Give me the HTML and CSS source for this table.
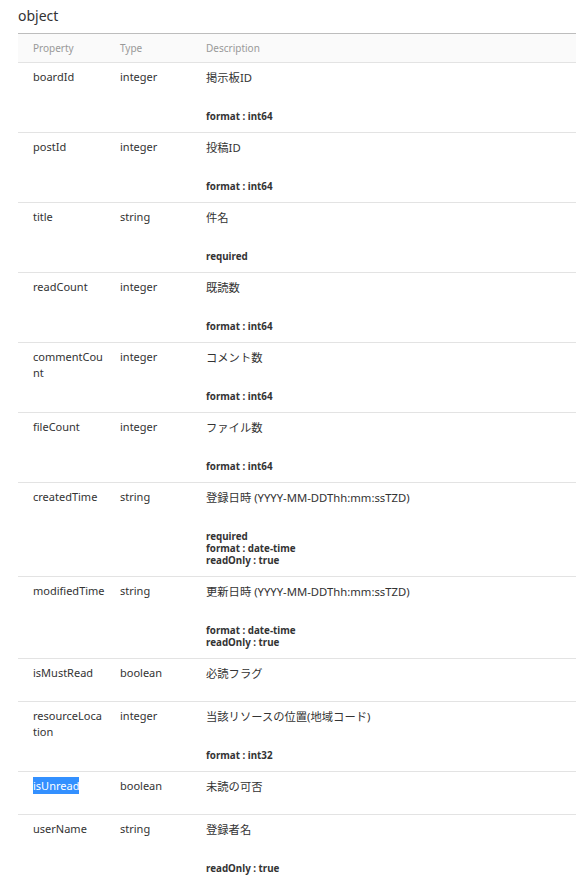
FILE: index.html
```html
<!DOCTYPE html>
<html lang="ja">
<head>
    <meta charset="UTF-8">
    <meta name="viewport" content="width=device-width, initial-scale=1.0">
    <title>object</title>
    <link rel="stylesheet" href="styles.css">
</head>
<body>
    <h3 class="model-title">object</h3>
    <table class="props">
        <thead>
            <tr>
                <th class="col-name">Property</th>
                <th class="col-type">Type</th>
                <th>Description</th>
            </tr>
        </thead>
        <tbody>
            <tr>
                <td>boardId</td>
                <td>integer</td>
                <td>
                    <p class="desc">掲示板ID</p>
                    <div class="attrs"><div>format : int64</div></div>
                </td>
            </tr>
            <tr>
                <td>postId</td>
                <td>integer</td>
                <td>
                    <p class="desc">投稿ID</p>
                    <div class="attrs"><div>format : int64</div></div>
                </td>
            </tr>
            <tr>
                <td>title</td>
                <td>string</td>
                <td>
                    <p class="desc">件名</p>
                    <div class="attrs"><div>required</div></div>
                </td>
            </tr>
            <tr>
                <td>readCount</td>
                <td>integer</td>
                <td>
                    <p class="desc">既読数</p>
                    <div class="attrs"><div>format : int64</div></div>
                </td>
            </tr>
            <tr>
                <td>commentCou<br>nt</td>
                <td>integer</td>
                <td>
                    <p class="desc">コメント数</p>
                    <div class="attrs"><div>format : int64</div></div>
                </td>
            </tr>
            <tr>
                <td>fileCount</td>
                <td>integer</td>
                <td>
                    <p class="desc">ファイル数</p>
                    <div class="attrs"><div>format : int64</div></div>
                </td>
            </tr>
            <tr>
                <td>createdTime</td>
                <td>string</td>
                <td>
                    <p class="desc">登録日時 (YYYY-MM-DDThh:mm:ssTZD)</p>
                    <div class="attrs">
                        <div>required</div>
                        <div>format : date-time</div>
                        <div>readOnly : true</div>
                    </div>
                </td>
            </tr>
            <tr>
                <td>modifiedTime</td>
                <td>string</td>
                <td>
                    <p class="desc">更新日時 (YYYY-MM-DDThh:mm:ssTZD)</p>
                    <div class="attrs">
                        <div>format : date-time</div>
                        <div>readOnly : true</div>
                    </div>
                </td>
            </tr>
            <tr>
                <td>isMustRead</td>
                <td>boolean</td>
                <td>
                    <p class="desc">必読フラグ</p>
                </td>
            </tr>
            <tr>
                <td>resourceLoca<br>tion</td>
                <td>integer</td>
                <td>
                    <p class="desc">当該リソースの位置(地域コード)</p>
                    <div class="attrs"><div>format : int32</div></div>
                </td>
            </tr>
            <tr>
                <td><span class="selected">isUnread</span></td>
                <td>boolean</td>
                <td>
                    <p class="desc">未読の可否</p>
                </td>
            </tr>
            <tr>
                <td>userName</td>
                <td>string</td>
                <td>
                    <p class="desc">登録者名</p>
                    <div class="attrs"><div>readOnly : true</div></div>
                </td>
            </tr>
        </tbody>
    </table>
</body>
</html>
```

FILE: styles.css
```css
body {
    margin: 0;
    font-family: "Noto Sans", "Noto Sans CJK JP", sans-serif;
    color: #333;
    background-color: #fff;
}
.model-title {
    margin: 0;
    padding: 6px 0 0 18px;
    height: 27px;
    font-size: 14px;
    font-weight: normal;
    line-height: 20px;
}
.props {
    margin-left: 18px;
    width: calc(100% - 18px);
    border-collapse: collapse;
    table-layout: fixed;
    font-size: 11px;
}
.props thead tr {
    background-color: #fafafa;
    border-top: 1px solid #bdbdbd;
    border-bottom: 1px solid #e3e3e3;
}
.props th {
    text-align: left;
    font-weight: normal;
    font-size: 10px;
    color: #999;
    height: 28px;
    padding: 0 2px 0 15px;
}
.props .col-name {
    width: 70px;
}
.props .col-type {
    width: 69px;
}
.props td {
    vertical-align: top;
    padding: 6px 2px 9px 15px;
    line-height: 16px;
    white-space: nowrap;
}
.props tbody tr {
    border-bottom: 1px solid #e3e3e3;
}
.desc {
    margin: 0 0 9px;
    line-height: 18px;
    font-size: 11.3px;
}
.attrs {
    padding-top: 15px;
    font-size: 9.8px;
    font-weight: bold;
    line-height: 12px;
}
.selected {
    background-color: #3390ff;
    color: #fff;
    padding: 1px 0;
}
```
